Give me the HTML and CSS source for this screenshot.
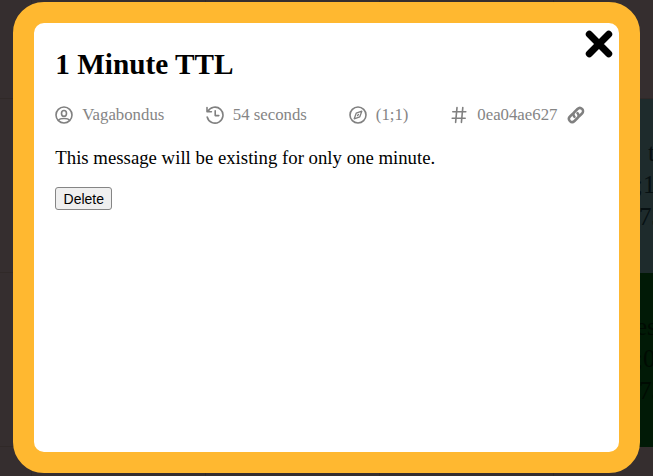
FILE: index.html
```
<!DOCTYPE html>
<html lang="en">
<head>
<meta charset="utf-8">
<title>1 Minute TTL</title>
<link rel="stylesheet" href="styles.css">
</head>
<body>
<div class="board">
  <div class="cell"></div><div class="cell"></div><div class="cell"></div><div class="cell"></div><div class="cell"></div>
  <div class="cell"></div><div class="cell"></div><div class="cell"></div><div class="cell"></div><div class="cell teal"><p class="first">t</p><p>;1</p><p class="code">73</p></div>
  <div class="cell"></div><div class="cell"></div><div class="cell"></div><div class="cell"></div><div class="cell green"><p>es</p><p>;0</p><p class="code">73</p></div>
  <div class="cell"></div><div class="cell"></div><div class="cell"></div><div class="cell"></div><div class="cell"></div>
</div>
<div class="modal">
  <button class="close" aria-label="Close"><svg viewBox="0 0 28 28"><path d="M4.3 4.3 23.7 23.7M23.7 4.3 4.3 23.7"/></svg></button>
  <h1>1 Minute TTL</h1>
  <div class="meta">
    <div class="item"><svg class="icon" viewBox="0 0 18 18"><circle cx="9" cy="9" r="8"/><ellipse cx="9" cy="7.4" rx="2.5" ry="2.9"/><path d="M3.4 14.2C4.8 12.4 6.4 12.5 9 12.5s4.2-.1 5.6 1.7"/></svg><span>Vagabondus</span></div>
    <div class="item"><svg class="icon" viewBox="0 0 18 18"><path d="M1.9 5.4A8 8 0 1 1 1.2 11M1 1.5v4.2h4.4M9.2 4.8v4.8h3.6"/></svg><span>54 seconds</span></div>
    <div class="item"><svg class="icon" viewBox="0 0 18 18"><circle cx="9" cy="9" r="8"/><path class="thin" d="M12.8 5.2 10.8 10.8 5.2 12.8 7.2 7.2zM8.5 9.5l1-1"/></svg><span>(1;1)</span></div>
    <div class="item"><svg class="icon hash" viewBox="0 0 18 18"><path d="M7 1.6 5.6 16.4M12.8 1.6 11.4 16.4M2.8 5.8H15.8M2.2 12.2H15.2"/></svg><span>0ea04ae627</span><svg class="icon link" viewBox="0 0 18 18"><path d="M7.5 10.8C6.1 9.3 6.1 7.4 7.5 6L10.5 3C13.6-.1 18.1 4.4 15 7.5L12.4 10.1"/><path d="M10.5 7.2C11.9 8.7 11.9 10.6 10.5 12L7.5 15C4.4 18.1-.1 13.6 3 10.5L5.6 7.9"/></svg></div>
  </div>
  <p class="message">This message will be existing for only one minute.</p>
  <button class="delete">Delete</button>
</div>
</body>
</html>
```
FILE: styles.css
```
* { box-sizing: border-box; }
body {
  margin: 0;
  height: 476px;
  overflow: hidden;
  background: #352e2f;
  font-family: "Liberation Serif", "Times New Roman", serif;
}
.board {
  display: grid;
  grid-template-columns: repeat(5, 174px);
  grid-auto-rows: 174px;
  margin: -75px 0 0 -142px;
}
.cell {
  border-right: 1px solid #302928;
  border-bottom: 1px solid #302928;
  padding: 38px 0 0 82px;
  font-size: 25px;
  line-height: 32px;
  color: #071012;
  white-space: nowrap;
  overflow: hidden;
}
.cell p { margin: 0; }
.cell.teal { background: #1e2b2c; border-color: #1e2b2c; }
.cell.green { background: #011a06; border-color: #011a06; color: #000b02; }
.teal .first { padding-left: 12px; }
.cell .code { padding-left: 3px; }

.modal {
  position: absolute;
  left: 13.3px;
  top: 2.3px;
  width: 626.4px;
  height: 470.4px;
  border: 21px solid #ffb830;
  border-radius: 31px;
  background: #fff;
  padding: 24px 21px 0;
}
.close {
  position: absolute;
  top: 6.5px;
  right: 6px;
  width: 28px;
  height: 28px;
  padding: 0;
  border: 0;
  background: none;
}
.close svg { display: block; stroke: #000; stroke-width: 7; stroke-linecap: round; }
h1 {
  margin: 0;
  font-size: 29.25px;
  line-height: 34px;
}
.meta {
  display: grid;
  grid-template-columns: 150.5px 143px 101.5px auto;
  height: 20px;
  margin-top: 23.5px;
  color: #858585;
  font-size: 16.8px;
  line-height: 20px;
}
.item { display: flex; align-items: center; gap: 9px; white-space: nowrap; }
.icon {
  flex: none;
  width: 18px;
  height: 18px;
  fill: none;
  stroke: #808080;
  stroke-width: 1.6;
  stroke-linecap: round;
  stroke-linejoin: round;
}
.thin { stroke-width: 1.3; }
.link { stroke-width: 2.5; margin-left: 1px; }
.message { margin: 21.5px 0 0; font-size: 18.78px; line-height: 24px; }
.delete {
  display: block;
  width: 57px;
  height: 23px;
  margin-top: 17px;
  padding: 0;
  border: 1px solid #858585;
  border-radius: 3px;
  background: #efefef;
  color: #000;
  font: 14px/20px "Liberation Sans", Arial, sans-serif;
}
```
